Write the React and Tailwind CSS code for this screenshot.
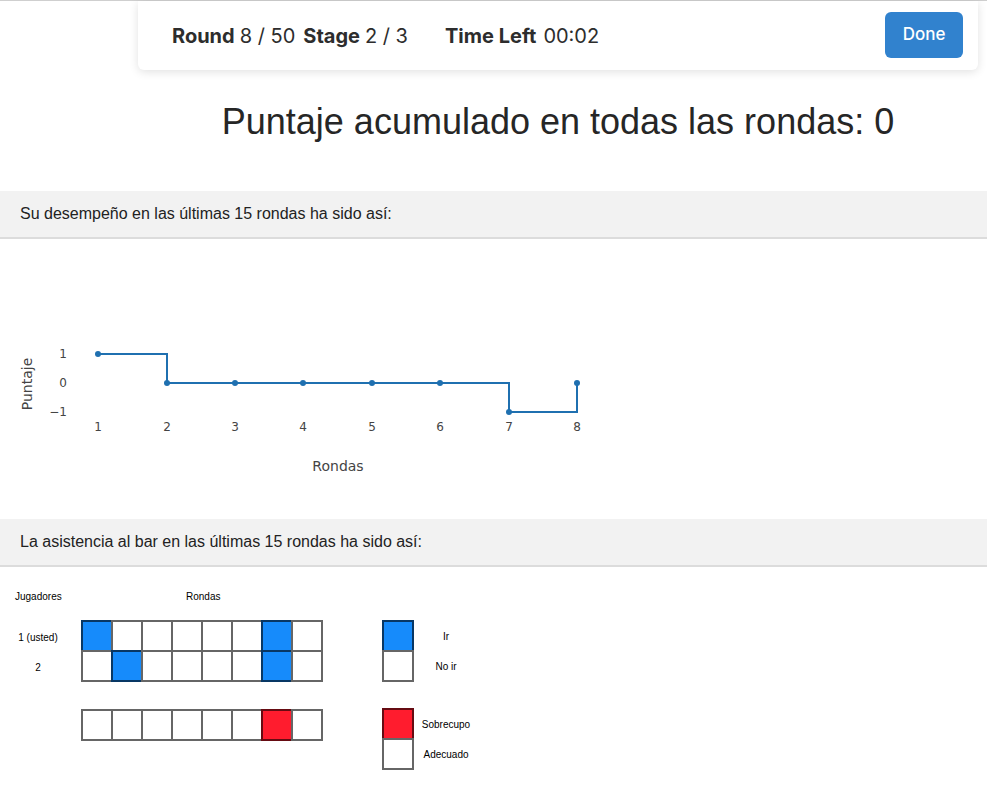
const xs = [98, 167, 235, 303, 372, 440, 509, 577];
const ys = [1, 0, 0, 0, 0, 0, -1, 0];
const yPix = (v) => 144 - v * 29;

const ScoreChart = () => {
  let d = `M${xs[0]},${yPix(ys[0])}`;
  for (let i = 1; i < xs.length; i++) {
    d += ` H${xs[i]} V${yPix(ys[i])}`;
  }
  return (
    <svg width="620" height="280" className="block" style={{ fontFamily: "'DejaVu Sans', Verdana, sans-serif" }}>
      <text x="0" y="0" transform="translate(32,145) rotate(-90)" textAnchor="middle" fontSize="14" fill="#444">
        Puntaje
      </text>
      {[1, 0, -1].map((v) => (
        <text key={v} x="67" y={yPix(v) + 4} textAnchor="end" fontSize="12" fill="#444">
          {v < 0 ? "−1" : v}
        </text>
      ))}
      {xs.map((x, i) => (
        <text key={x} x={x} y="192" textAnchor="middle" fontSize="12" fill="#444">
          {i + 1}
        </text>
      ))}
      <text x="338" y="232" textAnchor="middle" fontSize="14" fill="#444">
        Rondas
      </text>
      <path d={d} fill="none" stroke="#1f70b0" strokeWidth="2" />
      {xs.map((x, i) => (
        <circle key={x} cx={x} cy={yPix(ys[i])} r="3" fill="#1f70b0" />
      ))}
    </svg>
  );
};

const Cell = ({ color, first, top }) => (
  <div
    className={`w-[32px] h-[32px] border-2 border-black/60 ${color} ${first ? "" : "-ml-[2px]"} ${top ? "" : "-mt-[2px]"}`}
  />
);

const GridRow = ({ filled, color, top }) => (
  <div className="flex">
    {Array.from({ length: 8 }).map((_, i) => (
      <Cell key={i} first={i === 0} top={top} color={filled.includes(i) ? color : "bg-white"} />
    ))}
  </div>
);

const SectionBar = ({ children }) => (
  <div className="h-[48px] bg-[#f2f2f2] border-b-2 border-[#dcdcdc] flex items-center pl-[20px] text-[16px] text-[#222]">
    {children}
  </div>
);

const Legend = ({ color, labels, className }) => (
  <div className={`flex ${className}`}>
    <div className="flex flex-col">
      <Cell first top color={color} />
      <Cell first color="bg-white" />
    </div>
    <div className="flex flex-col w-[64px] items-center pt-[1px]">
      <div className="h-[30px] flex items-center">{labels[0]}</div>
      <div className="h-[30px] flex items-center">{labels[1]}</div>
    </div>
  </div>
);

export default function App() {
  return (
    <div className="min-h-[809px] bg-white border-t border-[#cfcfcf]" style={{ fontFamily: "'Liberation Sans', Arial, sans-serif" }}>
      <div className="ml-[138px] mr-[9px]">
        <div
          className="h-[69px] bg-white rounded-b-md shadow-[0_2px_10px_rgba(0,0,0,0.12)] flex items-center justify-between pl-[34px] pr-[15px] text-[20px] text-[#2d2d2d]"
          style={{ fontFamily: "Inter, 'Noto Sans', sans-serif" }}
        >
          <div className="flex items-center">
            <span className="font-bold">Round</span>
            <span className="ml-[5px]">8 / 50</span>
            <span className="font-bold ml-[8px]">Stage</span>
            <span className="ml-[5px]">2 / 3</span>
            <span className="font-bold ml-[37px]">Time Left</span>
            <span className="ml-[7px]">00:02</span>
          </div>
          <button className="w-[78px] h-[46px] -mt-[2px] rounded-md bg-[#3182ce] text-white text-[17px] font-medium">
            Done
          </button>
        </div>
        <h1 className="text-center text-[36px] text-[#262626] mt-[31px] leading-[41px]">
          Puntaje acumulado en todas las rondas: 0
        </h1>
      </div>

      <div className="mt-[49px]">
        <SectionBar>Su desempeño en las últimas 15 rondas ha sido así:</SectionBar>
        <ScoreChart />
        <SectionBar>La asistencia al bar en las últimas 15 rondas ha sido así:</SectionBar>
      </div>

      <div className="flex text-[10px] text-black pt-[24px]">
        <div className="w-[76px] flex flex-col items-center">
          <div className="h-[12px] leading-[12px] self-start pl-[15px]">Jugadores</div>
          <div className="mt-[19px] h-[30px] flex items-center">1 (usted)</div>
          <div className="h-[30px] flex items-center">2</div>
        </div>
        <div className="flex flex-col ml-[5px]">
          <div className="h-[12px] leading-[12px] pl-[105px]">Rondas</div>
          <div className="mt-[17px]">
            <GridRow filled={[0, 6]} color="bg-[#168bfb]" top />
            <GridRow filled={[1, 6]} color="bg-[#168bfb]" />
          </div>
          <div className="mt-[27px]">
            <GridRow filled={[6]} color="bg-[#ff1c2e]" top />
          </div>
        </div>
        <div className="flex flex-col ml-[59px] pt-[29px]">
          <Legend color="bg-[#168bfb]" labels={["Ir", "No ir"]} />
          <Legend color="bg-[#ff1c2e]" labels={["Sobrecupo", "Adecuado"]} className="mt-[26px]" />
        </div>
      </div>
    </div>
  );
}
